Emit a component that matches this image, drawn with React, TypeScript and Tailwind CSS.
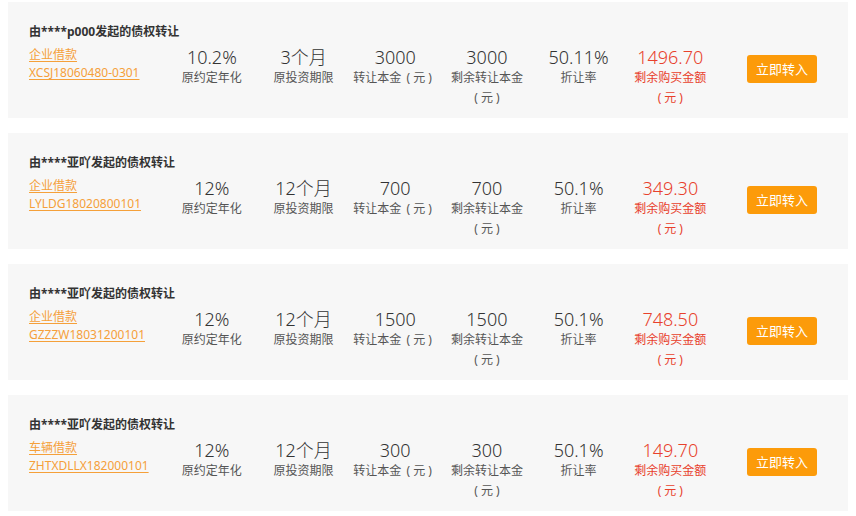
import React from "react";

type Item = {
  title: string;
  type: string;
  code: string;
  rate: string;
  term: string;
  amt: string;
  remain: string;
  discount: string;
  price: string;
};

const items: Item[] = [
  { title: "由****p000发起的债权转让", type: "企业借款", code: "XCSJ18060480-0301", rate: "10.2%", term: "3个月", amt: "3000", remain: "3000", discount: "50.11%", price: "1496.70" },
  { title: "由****亚吖发起的债权转让", type: "企业借款", code: "LYLDG18020800101", rate: "12%", term: "12个月", amt: "700", remain: "700", discount: "50.1%", price: "349.30" },
  { title: "由****亚吖发起的债权转让", type: "企业借款", code: "GZZZW18031200101", rate: "12%", term: "12个月", amt: "1500", remain: "1500", discount: "50.1%", price: "748.50" },
  { title: "由****亚吖发起的债权转让", type: "车辆借款", code: "ZHTXDLLX182000101", rate: "12%", term: "12个月", amt: "300", remain: "300", discount: "50.1%", price: "149.70" },
];

function Yuan() {
  return (
    <span className="inline-flex">
      <span className="inline-block w-[12px] text-right pr-[3px]">(</span>
      <span>元</span>
      <span className="inline-block w-[12px] text-left pl-[3px]">)</span>
    </span>
  );
}

function Col({ value, label, yuan, wrap, red }: { value: string; label: string; yuan?: boolean; wrap?: boolean; red?: boolean }) {
  const c = `text-[12px] leading-[20px] whitespace-nowrap ${red ? "text-[#e8412c]" : "text-[#555]"}`;
  return (
    <div className="w-[91.7px] shrink-0 flex flex-col items-center text-center">
      <div className={`text-[18px] leading-[22px] font-light ${red ? "text-[#e8412c]" : "text-[#333]"}`}>{value}</div>
      {wrap ? (
        <>
          <div className={c}>{label}</div>
          <div className={c}>
            <Yuan />
          </div>
        </>
      ) : (
        <div className={c}>
          {label}
          {yuan && <Yuan />}
        </div>
      )}
    </div>
  );
}

function Card({ it }: { it: Item }) {
  return (
    <div className="h-[116px] bg-[#f7f7f7] ml-[8px] w-[840px] mb-[15px] pt-[20px] pl-[21px]">
      <div className="text-[12px] leading-[20px] font-bold text-[#333]">{it.title}</div>
      <div className="flex mt-[4px]">
        <div className="w-[137px] shrink-0 flex flex-col items-start text-[12px] leading-[18px] text-[#f5a03a]">
          <span className="underline underline-offset-2">{it.type}</span>
          <span className="underline underline-offset-2">{it.code}</span>
        </div>
        <Col value={it.rate} label="原约定年化" />
        <Col value={it.term} label="原投资期限" />
        <Col value={it.amt} label="转让本金" yuan />
        <Col value={it.remain} label="剩余转让本金" wrap />
        <Col value={it.discount} label="折让率" />
        <Col value={it.price} label="剩余购买金额" wrap red />
        <button className="ml-[31px] mt-[9px] w-[70px] h-[28px] rounded-[3px] bg-[#fc9b0a] text-white text-[13px] leading-[28px]">
          立即转入
        </button>
      </div>
    </div>
  );
}

export default function App() {
  return (
    <div
      className="w-[856px] h-[516px] bg-white overflow-hidden pt-[2px]"
      style={{ fontFamily: '"Noto Sans", "Noto Sans CJK SC", sans-serif' }}
    >
      {items.map((it, i) => (
        <Card key={i} it={it} />
      ))}
    </div>
  );
}
